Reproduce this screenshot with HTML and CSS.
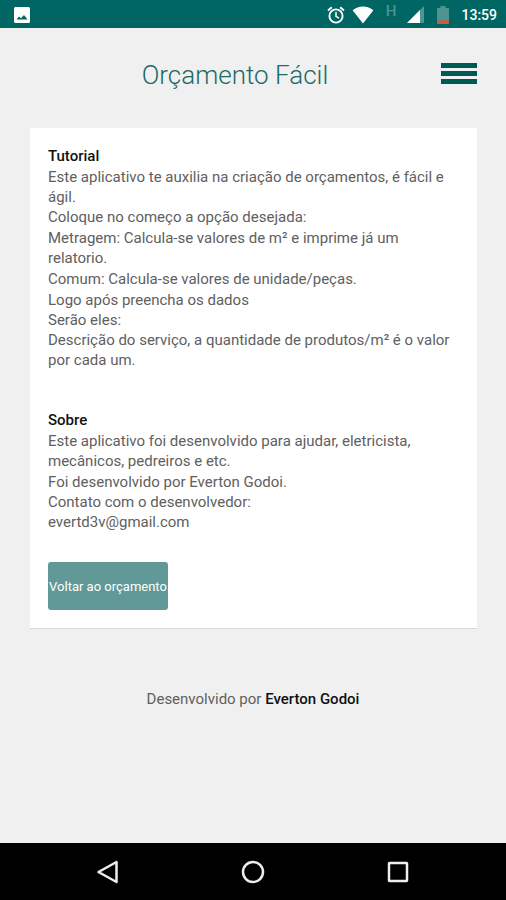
FILE: index.html
```html
<!DOCTYPE html>
<html lang="pt-BR">
  <head>
    <meta charset="utf-8" />
    <title>Orçamento Fácil</title>
    <meta name="viewport" content="width=device-width, initial-scale=1" />
    <link rel="stylesheet" href="styles.css">
  </head>
  <body>
    <div class="status-bar">
      <svg width="16" height="16" viewBox="0 0 16 16">
        <rect width="16" height="16" rx="1.5" fill="#fff" />
        <path d="M2.5 12.500L5 9.500l2 1.700 3-3.200 3.500 4.500z" fill="#006663" />
      </svg>
      <div class="status-icons">
        <!-- alarm -->
        <svg width="18" height="18" viewBox="0 0 18 18" fill="none" stroke="#fff">
          <circle cx="9" cy="10" r="6.6" stroke-width="1.9" />
          <path d="M9 6v4.300l3 1.800" stroke-width="1.5" />
          <path d="M1 4.400L4.800 1.200M17 4.400l-3.800-3.200" stroke-width="1.9" />
        </svg>
        <!-- wifi -->
        <svg class="wifi" width="22" height="18" viewBox="0 0 22 18">
          <path d="M11 17.500L.6 4.300C3.500 1.800 7 .5 11 .5s7.500 1.300 10.400 3.800z" fill="#fff" />
        </svg>
        <span class="network">H</span>
        <!-- signal -->
        <svg class="signal" width="17" height="17" viewBox="0 0 17 17">
          <path d="M0 17L17 0v17z" fill="#4d9492" />
          <path d="M0 17L13 4v13z" fill="#fff" />
        </svg>
        <!-- battery -->
        <svg class="battery" width="12" height="18" viewBox="0 0 12 18">
          <path d="M1 2h2.500V0h5v2H11q1 0 1 1v12H0V3q0-1 1-1z" fill="#4d9492" />
          <path d="M0 14.500h12V17q0 1-1 1H1q-1 0-1-1z" fill="#d9572b" />
        </svg>
        <span class="clock">13:59</span>
      </div>
    </div>

    <header class="header">
      <h1>Orçamento Fácil</h1>
      <button class="menu" type="button" aria-label="Menu">
        <span></span>
        <span></span>
        <span></span>
      </button>
    </header>

    <main class="card">
      <section class="text">
        <h2>Tutorial</h2>
        <p>
          Este aplicativo te auxilia na criação de orçamentos, é fácil e ágil.<br />
          Coloque no começo a opção desejada:
        </p>
        <p>Metragem: Calcula-se valores de m² e imprime já um relatorio.</p>
        <p>Comum: Calcula-se valores de unidade/peças.</p>
        <p>
          Logo após preencha os dados<br />
          Serão eles:<br />
          Descrição do serviço, a quantidade de produtos/m² é o valor por cada um.
        </p>
      </section>
      <section class="text">
        <h2>Sobre</h2>
        <p>
          Este aplicativo foi desenvolvido para ajudar, eletricista, mecânicos,
          pedreiros e etc.
        </p>
        <p>
          Foi desenvolvido por Everton Godoi.<br />
          Contato com o desenvolvedor:<br />
          evertd3v@gmail.com
        </p>
      </section>
      <button class="back" type="button">Voltar ao orçamento</button>
    </main>

    <footer class="footer">Desenvolvido por <b>Everton Godoi</b></footer>

    <nav class="nav-bar">
      <button type="button" aria-label="Voltar">
        <svg width="24" height="24" viewBox="0 0 24 24">
          <path d="M20.500 2v20L2.500 12z" />
        </svg>
      </button>
      <button type="button" aria-label="Início">
        <svg width="24" height="24" viewBox="0 0 24 24">
          <circle cx="12" cy="12" r="10" />
        </svg>
      </button>
      <button type="button" aria-label="Recentes">
        <svg width="24" height="24" viewBox="0 0 24 24">
          <rect x="3" y="3" width="18" height="18" rx="0.5" />
        </svg>
      </button>
    </nav>
  </body>
</html>
```

FILE: styles.css
```css
* {
  box-sizing: border-box;
}

body {
  display: flex;
  flex-direction: column;
  min-height: 100vh;
  margin: 0;
  background-color: #f0f0f0;
  color: #606060;
  font-family: Roboto, "Liberation Sans", sans-serif;
  font-size: 15px;
  line-height: 20px;
}

h1,
h2,
p {
  margin: 0;
}

button {
  border: 0;
  padding: 0;
  font-family: inherit;
  cursor: pointer;
}

/* Android status bar */
.status-bar {
  display: flex;
  justify-content: space-between;
  align-items: center;
  height: 28px;
  padding: 2px 9px 0 14px;
  background-color: #006663;
}

.status-icons {
  display: flex;
  align-items: center;
}

.wifi {
  margin-left: 7px;
}

.network {
  margin: 0 11px 8px 12px;
  color: #4d9492;
  font-size: 15px;
  font-weight: 500;
  line-height: 16px;
}

.signal {
  margin-bottom: 2px;
}

.battery {
  margin: 0 12px 0 13px;
}

.clock {
  color: #fff;
  font-size: 14px;
  font-weight: 500;
}

/* Header */
.header {
  display: flex;
  align-items: center;
  height: 100px;
  padding: 0 29px 6px;
}

.header h1 {
  flex: 1;
  color: #1d6a64;
  font-size: 26px;
  font-weight: 300;
  line-height: 36px;
  text-align: center;
}

.menu {
  display: flex;
  flex-direction: column;
  gap: 3px;
  margin-bottom: 4px;
  background: none;
}

.menu span {
  width: 36px;
  height: 5px;
  background-color: #005a54;
}

/* Card */
.card {
  margin: 0 29px 0 30px;
  padding: 18px;
  border-bottom: 1px solid #d8d8d8;
  background-color: #fff;
}

.text {
  display: flex;
  flex-direction: column;
  gap: 1px;
  margin-bottom: 40px;
}

.text h2 {
  color: #111;
  font-size: 15px;
  font-weight: 500;
}

.text:nth-of-type(2) {
  margin-bottom: 30px;
}

.back {
  display: block;
  width: 120px;
  height: 48px;
  border-radius: 3px;
  background-color: #609997;
  color: #fff;
  font-size: 13px;
}

.footer {
  margin: 60px 0;
  text-align: center;
}

.footer b {
  color: #111;
  font-weight: 500;
}

/* Android navigation bar */
.nav-bar {
  display: flex;
  justify-content: center;
  align-items: center;
  gap: 24%;
  height: 57px;
  margin-top: auto;
  background-color: #000;
}

.nav-bar button {
  height: 24px;
  background: none;
}

.nav-bar svg {
  fill: none;
  stroke: #eee;
  stroke-width: 2.5;
  stroke-linejoin: round;
}
```
